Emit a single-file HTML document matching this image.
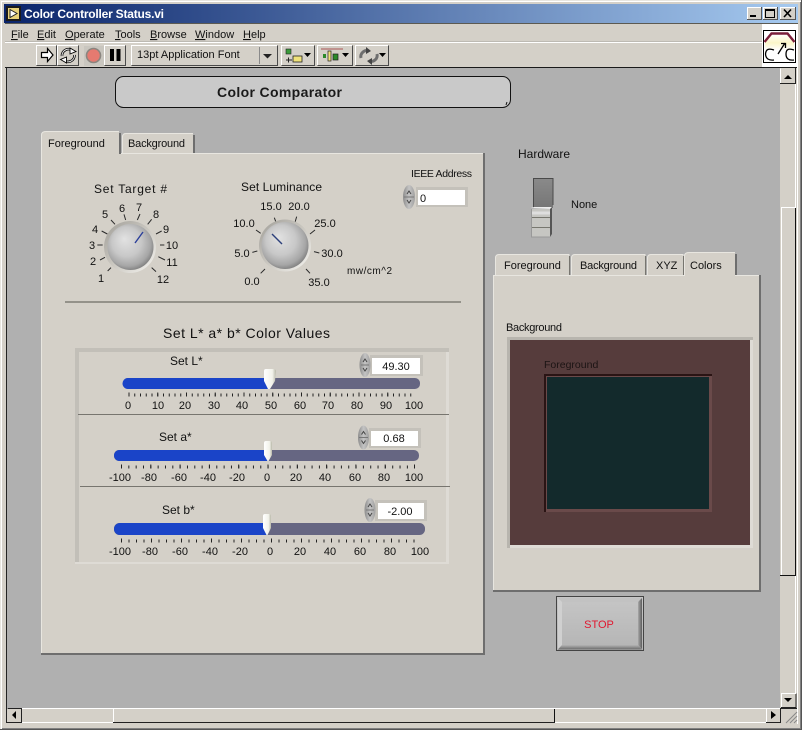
<!DOCTYPE html>
<html><head><meta charset="utf-8"><title>Color Controller Status.vi</title>
<style>
html,body{margin:0;padding:0;background:#fff;width:810px;height:733px;overflow:hidden}
svg{display:block;filter:blur(.3px)}
text{font-family:"Liberation Sans",sans-serif;font-size:11px;fill:#111}
.m{text-anchor:middle}
.u{text-decoration:underline}
</style></head><body>
<svg width="810" height="733" viewBox="0 0 810 733" xmlns="http://www.w3.org/2000/svg">
<defs>
<linearGradient id="tb" x1="0" x2="1" y1="0" y2="0"><stop offset="0" stop-color="#0a246a"/><stop offset="1" stop-color="#a6caf0"/></linearGradient>
<radialGradient id="ball" cx=".46" cy=".44" r=".58" fx=".36" fy=".32"><stop offset="0" stop-color="#e2e2e2"/><stop offset=".55" stop-color="#c8c8c8"/><stop offset=".85" stop-color="#a6a6a6"/><stop offset="1" stop-color="#7e7e7e"/></radialGradient>
<linearGradient id="halo" x1="0" y1="0" x2="1" y2="1"><stop offset="0" stop-color="#a09e98"/><stop offset=".5" stop-color="#cac7c0"/><stop offset="1" stop-color="#f6f5f1"/></linearGradient>
<linearGradient id="thumb" x1="0" x2="1" y1="0" y2="0"><stop offset="0" stop-color="#fff"/><stop offset=".7" stop-color="#f2f2ea"/><stop offset="1" stop-color="#b8b8a8"/></linearGradient>
<linearGradient id="spin" x1="0" x2="1" y1="0" y2="0"><stop offset="0" stop-color="#8c8c8c"/><stop offset=".5" stop-color="#c4c4c4"/><stop offset="1" stop-color="#a0a0a0"/></linearGradient>
<linearGradient id="stopg" x1="0" y1="0" x2="0" y2="1"><stop offset="0" stop-color="#c6c6c6"/><stop offset="1" stop-color="#b4b4b4"/></linearGradient>
<linearGradient id="tg" x1="0" y1="0" x2="0" y2="1"><stop offset="0" stop-color="#8a8a8a"/><stop offset="1" stop-color="#767676"/></linearGradient>
<linearGradient id="arc" x1="0" y1="0" x2="0" y2="1"><stop offset="0" stop-color="#fff"/><stop offset=".55" stop-color="#fbf6c8"/><stop offset="1" stop-color="#fff"/></linearGradient>
<linearGradient id="sb" x1="0" y1="0" x2="0" y2="1"><stop offset="0" stop-color="#b4b4b4"/><stop offset="1" stop-color="#6a6a6a"/></linearGradient>
<linearGradient id="sr" x1="0" y1="0" x2="1" y2="0"><stop offset="0" stop-color="#a8a8a8"/><stop offset="1" stop-color="#5e5e5e"/></linearGradient>
</defs>

<!-- window frame -->
<rect x="0" y="0" width="802" height="730" fill="#d4d0c8"/>
<path d="M0.5 730V0.5H802" fill="none" stroke="#e8e6e0"/>
<path d="M1.5 729V1.5H801" fill="none" stroke="#fff"/>
<path d="M801.5 0V729.5H0" fill="none" stroke="#555"/>
<path d="M800.5 2V728.5H2" fill="none" stroke="#808080"/>

<!-- title bar -->
<rect x="4" y="4" width="794" height="19" fill="url(#tb)"/>
<rect x="5" y="23" width="793" height="1" fill="#5c5a52"/>
<rect x="6" y="6" width="15" height="15" fill="#1b1b1b"/>
<rect x="8" y="8" width="11" height="11" fill="#e8d27a"/>
<path d="M10 9.5L17 13.5L10 17.5Z" fill="#fff" stroke="#222" stroke-width="1"/>
<text x="24" y="18" style="font-size:12px;font-weight:bold;fill:#fff" textLength="140">Color Controller Status.vi</text>
<g>
<rect x="747" y="7" width="15" height="13" fill="#d4d0c8"/><path d="M747.5 20V7.5H762" fill="none" stroke="#fff"/><path d="M761.5 7V19.5H747" fill="none" stroke="#555"/><rect x="750" y="15" width="6" height="2" fill="#000"/>
<rect x="763" y="7" width="15" height="13" fill="#d4d0c8"/><path d="M763.5 20V7.5H778" fill="none" stroke="#fff"/><path d="M777.5 7V19.5H763" fill="none" stroke="#555"/><rect x="765.5" y="9.5" width="9" height="8" fill="none" stroke="#000"/><rect x="765" y="9" width="10" height="2" fill="#000"/>
<rect x="780" y="7" width="16" height="13" fill="#d4d0c8"/><path d="M780.5 20V7.5H796" fill="none" stroke="#fff"/><path d="M795.5 7V19.5H780" fill="none" stroke="#555"/><path d="M784 9.5L791 17M791 9.5L784 17" stroke="#000" stroke-width="1.6"/>
</g>

<!-- menu -->
<text x="11" y="38"><tspan class="u">F</tspan>ile</text>
<text x="37" y="38"><tspan class="u">E</tspan>dit</text>
<text x="65" y="38"><tspan class="u">O</tspan>perate</text>
<text x="115" y="38"><tspan class="u">T</tspan>ools</text>
<text x="150" y="38"><tspan class="u">B</tspan>rowse</text>
<text x="195" y="38"><tspan class="u">W</tspan>indow</text>
<text x="243" y="38"><tspan class="u">H</tspan>elp</text>
<rect x="5" y="42" width="757" height="1" fill="#fff"/>
<rect x="5" y="41" width="757" height="1" fill="#bdbab3"/>

<!-- toolbar -->
<g fill="#d4d0c8" stroke="#4a4a4a">
<path d="M36.500 65.500H56.500V45.500"/>
<path d="M57.500 65.500H78.500V45.500"/>
<path d="M104.500 65.500H125.500V45.500"/>
<path d="M131.500 65.500H277.500V45.500"/>
<path d="M281.500 65.500H314.500V45.500"/>
<path d="M317.500 65.500H352.500V45.500"/>
<path d="M355.500 65.500H388.500V45.500"/>
</g>
<g fill="none" stroke="#fff">
<path d="M36.500 65V45.500H56M57.500 65V45.500H78M104.500 65V45.500H125M131.500 65V45.500H277M281.500 65V45.500H314M317.500 65V45.500H352M355.500 65V45.500H388"/>
</g>
<path d="M41.500 52.500H47.500V48.500L53 55L47.500 61.500V57.500H41.500Z" fill="#fff" stroke="#000" stroke-width="1.200"/>
<path d="M62 56a6.500 6.500 0 0 1 11-5M74.500 55a6.500 6.500 0 0 1-11 5" fill="none" stroke="#000" stroke-width="2.600"/>
<path d="M62 56a6.500 6.500 0 0 1 11-5M74.500 55a6.500 6.500 0 0 1-11 5" fill="none" stroke="#e8e8e8" stroke-width="1"/>
<path d="M70 48L76 51.500L70 54ZM66.500 63L60.500 59.500L66.500 57Z" fill="#fff" stroke="#000" stroke-width=".9"/>
<rect x="84" y="46" width="20" height="20" fill="#c9c6bf"/>
<circle cx="93.500" cy="55.500" r="7" fill="#e57a70" stroke="#8b8680" stroke-width="1.600"/>
<rect x="110" y="49" width="4" height="12" fill="#000"/><rect x="116.500" y="49" width="4" height="12" fill="#000"/>
<text x="137" y="58">13pt Application Font</text>
<path d="M259.500 47V64" stroke="#8a8a8a"/>
<path d="M263 54H272L267.500 58.500Z" fill="#222"/>
<rect x="286" y="49" width="5" height="5" fill="#3a9a3a" stroke="#222" stroke-width=".6"/>
<path d="M286 60h6M288.500 57.500v5" stroke="#222" stroke-width="1"/>
<rect x="293" y="56" width="9" height="6" fill="#efe27a" stroke="#222" stroke-width=".8"/>
<path d="M304 53H311L307.500 57Z" fill="#000"/>
<path d="M321 49h22" stroke="#a55" stroke-width="1"/>
<rect x="323" y="54" width="3" height="4" fill="#2a8a2a"/><rect x="328" y="51" width="3" height="10" fill="#efe27a" stroke="#222" stroke-width=".7"/><rect x="333" y="54" width="5" height="6" fill="#2a8a2a" stroke="#222" stroke-width=".7"/>
<path d="M342 53H349L345.500 57Z" fill="#000"/>
<path d="M361 58a6 6 0 0 1 8-7M377 54a6 6 0 0 1-8 7" fill="none" stroke="#6e6e6e" stroke-width="3"/>
<path d="M366 47l5 4-5 3zM372 65l-5-4 5-3z" fill="#444"/>
<path d="M379 53H386L382.500 57Z" fill="#000"/>

<!-- vi icon -->
<rect x="762" y="24" width="36" height="44" fill="#fff"/>
<rect x="763.500" y="30.500" width="32" height="32" fill="#fff" stroke="#000"/>
<path d="M765 43L772 34H787L794 43V50H765Z" fill="url(#arc)"/>
<path d="M764.500 42L771.500 33.500H787.500L794.500 42" fill="none" stroke="#7a1e3a" stroke-width="2.400"/>
<path d="M774 50Q766 47 765.500 54Q766 61 774 60M794 50Q786 47 786 54Q786 61 794 60" fill="none" stroke="#000" stroke-width="1.300"/>
<path d="M778 54L785 43M781 43.500H785.500V48" fill="none" stroke="#000" stroke-width="1.300"/>

<!-- panel -->
<rect x="6" y="67" width="775" height="642" fill="#b0b0b0"/>
<rect x="5" y="67" width="757" height="1" fill="#1a1a1a"/>
<rect x="762" y="67" width="36" height="1" fill="#1a1a1a"/>
<rect x="6" y="67" width="1" height="656" fill="#222"/>

<!-- vertical scrollbar -->
<rect x="780" y="68" width="16" height="640" fill="#d4d0c8"/>
<rect x="781" y="68" width="15" height="16" fill="#d4d0c8"/>
<path d="M780.500 84V68.500" stroke="#fff"/><path d="M780 83.500H796" stroke="#222"/><path d="M795.500 68V84" stroke="#222"/>
<path d="M784 79H792L788 75Z" fill="#000"/>
<rect x="795" y="84" width="1" height="124" fill="#fff"/>
<path d="M781 207.500H795" stroke="#fff"/><path d="M781.500 208V575" stroke="#fff"/>
<rect x="795" y="208" width="1" height="368" fill="#111"/>
<rect x="780" y="575" width="16" height="1" fill="#111"/>
<rect x="795" y="576" width="1" height="117" fill="#fff"/>
<path d="M781.500 693.500V707.500H796V693.500" fill="#d4d0c8" stroke="#222"/>
<path d="M781.500 707V693.500H796" fill="none" stroke="#fff"/>
<path d="M784 698H792L788 702Z" fill="#000"/>
<rect x="797" y="24" width="1" height="700" fill="#fff"/>

<!-- horizontal scrollbar -->
<rect x="7" y="708" width="790" height="15" fill="#d4d0c8"/>
<rect x="7" y="708" width="773" height="1" fill="#fff"/>
<path d="M7.500 708.500H21.500V722" fill="none" stroke="#222"/>
<path d="M7 722.500H22" stroke="#222"/>
<path d="M16 711V719L12 715Z" fill="#000"/>
<rect x="22" y="722" width="91" height="1" fill="#fff"/>
<path d="M113.500 708V722" stroke="#fff"/>
<rect x="113" y="722" width="442" height="1" fill="#222"/>
<path d="M554.500 709V722" stroke="#111"/>
<rect x="555" y="722" width="211" height="1" fill="#fff"/>
<path d="M766.500 708.500V722" stroke="#fff"/>
<path d="M780.500 708V722.500H766" fill="none" stroke="#222"/>
<path d="M780 708.500H797" stroke="#222"/>
<path d="M771 711V719L776 715Z" fill="#000"/>
<path d="M786 723L797 712M790 723L797 716M794 723L797 720" stroke="#888" stroke-width="1"/>

<!-- title decoration -->
<rect x="115.500" y="76.500" width="395" height="31" rx="8" fill="#c9c9c9" stroke="#111"/>
<path d="M506 105L507 102" stroke="#111"/>
<text x="217" y="97" textLength="125" style="font-size:14px;font-weight:bold;fill:#1a1a1a">Color Comparator</text>

<!-- left tab panel -->
<rect x="41" y="153" width="444" height="502" fill="#d4d0c8"/>
<path d="M41.500 655V153.500H485" fill="none" stroke="#e8e6e0"/>
<rect x="483" y="153" width="2" height="502" fill="#6e6e6e"/>
<rect x="41" y="653" width="444" height="2" fill="#6e6e6e"/>
<path d="M42 155V135Q42 131 46 131H119V155Z" fill="#d4d0c8"/>
<path d="M41.500 154V135Q41.500 131.500 46 131.500H119" fill="none" stroke="#e8e6e0"/>
<rect x="119" y="133" width="2" height="21" fill="#6e6e6e"/>
<path d="M122 153V137Q122 133 126 133H193V153Z" fill="#d4d0c8"/>
<path d="M122.500 153V137Q122.500 133.500 126 133.500H193" fill="none" stroke="#e8e6e0"/>
<rect x="193" y="135" width="2" height="18" fill="#6e6e6e"/>
<text x="48" y="147">Foreground</text>
<text x="128" y="147" textLength="57">Background</text>

<text x="94" y="193" style="font-size:12px" textLength="73">Set Target #</text>
<text x="241" y="191" style="font-size:12px" textLength="81">Set Luminance</text>
<text x="411" y="177" style="font-size:10.500px" textLength="61">IEEE Address</text>

<!-- knob ticks -->
<g transform="translate(40,125) scale(.33333)" stroke="#2a2a2a" stroke-width="3" fill="none">
<path d="M213 428L203 438M195 397L180 405M188 360H172M202 327L185 318M225 298L213 285M257 285L252 268M292 285L300 267M323 298L335 283M348 327L365 318M360 360H373M355 395L375 405M335 428L348 440"/>
<path d="M675 432L662 445M652 378L637 382M662 325L648 315M708 292L703 278M765 292L770 275M810 327L825 315M822 380L838 384M798 432L810 445"/>
</g>
<g>
<text class="m" x="101" y="282">1</text><text class="m" x="93" y="265">2</text><text class="m" x="92" y="249">3</text><text class="m" x="95" y="233">4</text><text class="m" x="105" y="218">5</text><text class="m" x="122" y="212">6</text><text class="m" x="139" y="211">7</text><text class="m" x="156" y="218">8</text><text class="m" x="166" y="233">9</text><text class="m" x="172" y="249">10</text><text class="m" x="172" y="266">11</text><text class="m" x="163" y="283">12</text>
<text class="m" x="252" y="285">0.0</text><text class="m" x="242" y="257">5.0</text><text class="m" x="244" y="227">10.0</text><text class="m" x="271" y="210">15.0</text><text class="m" x="299" y="210">20.0</text><text class="m" x="325" y="227">25.0</text><text class="m" x="332" y="257">30.0</text><text class="m" x="319" y="286">35.0</text>
</g>
<text x="347" y="274" style="font-size:10px" textLength="45">mw/cm^2</text>

<!-- knobs -->
<circle cx="130" cy="247" r="26" fill="url(#halo)"/>
<circle cx="130.500" cy="247" r="23" fill="url(#ball)"/>
<path d="M135 243L143 232" stroke="#2b3f9a" stroke-width="1.400"/>
<circle cx="285" cy="245.500" r="26" fill="url(#halo)"/>
<circle cx="285" cy="245.500" r="23.500" fill="url(#ball)"/>
<path d="M272 234L282 244" stroke="#2b3f7a" stroke-width="1.400"/>

<!-- IEEE numeric -->
<rect x="416" y="187" width="52" height="20" fill="#c4c1ba"/>
<rect x="418" y="190" width="47" height="15" fill="#fff"/>
<ellipse cx="409" cy="197" rx="6" ry="12" fill="url(#spin)"/>
<path d="M407 194L409 191L411 194M407 200L409 203L411 200" fill="none" stroke="#444"/>
<path d="M404 197H414" stroke="#777"/>
<text x="420" y="202">0</text>

<path d="M65 302H461" stroke="#6e6c66" stroke-width="1.200"/>
<text x="163" y="338" style="font-size:14px" textLength="167">Set L* a* b* Color Values</text>

<!-- cluster -->
<rect x="75" y="348" width="374" height="216" fill="#c2bfb8"/>
<rect x="79" y="352" width="367" height="210" fill="#d4d0c8"/>
<path d="M446 352H449V564H75V562H446Z" fill="#dedbd5"/>
<path d="M78 414.500H449M80 486.500H450" stroke="#77756f"/>

<text x="170" y="365" style="font-size:12px">Set L*</text>
<text x="159" y="441" style="font-size:12px">Set a*</text>
<text x="162" y="514" style="font-size:12px">Set b*</text>

<!-- numerics -->
<g fill="#c4c1ba"><rect x="370" y="355" width="53" height="21"/><rect x="369" y="428" width="52" height="20"/><rect x="375" y="500" width="52" height="21"/></g>
<g fill="#fff"><rect x="372" y="358" width="48" height="16"/><rect x="371" y="431" width="47" height="15"/><rect x="378" y="503" width="46" height="16"/></g>
<g fill="url(#spin)"><ellipse cx="365" cy="365" rx="5.500" ry="12"/><ellipse cx="363.500" cy="437.500" rx="5.500" ry="12"/><ellipse cx="370" cy="510" rx="5.500" ry="12"/></g>
<path d="M361 365H369M359 437.500H368M366 510H374" stroke="#777"/>
<path d="M363 362L365 359L367 362M363 368L365 371L367 368M361.500 434.500L363.500 431.500L365.500 434.500M361.500 440.500L363.500 443.500L365.500 440.500M368 507L370 504L372 507M368 513L370 516L372 513" fill="none" stroke="#444"/>
<text x="396" y="370" class="m">49.30</text>
<text x="394" y="442" class="m">0.68</text>
<text x="400" y="515" class="m">-2.00</text>

<!-- slider tracks -->
<rect x="123" y="378" width="297" height="11" rx="5" fill="#666682"/>
<path d="M128 378H269V389H128A5.500 5.500 0 0 1 128 378Z" fill="#1a44c8"/>
<rect x="114" y="450" width="305" height="11" rx="5" fill="#666682"/>
<path d="M119.500 450H268V461H119.500A5.500 5.500 0 0 1 119.500 450Z" fill="#1a44c8"/>
<rect x="114" y="523" width="311" height="12" rx="5.500" fill="#666682"/>
<path d="M120 523H267V535H120A6 6 0 0 1 120 523Z" fill="#1a44c8"/>

<!-- slider thumbs -->
<path d="M264 371Q264 369 266 369H273Q276 369 276 371L275 381L270 389H268L264 381Z" fill="url(#thumb)"/>
<path d="M264 443Q264 441 266 441H270Q272 441 272 443V455L268.500 461H267.500L264 455Z" fill="url(#thumb)"/>
<path d="M263 516Q263 514 265 514H269Q271 514 271 516V528L267.500 535H266.500L263 528Z" fill="url(#thumb)"/>

<!-- slider ticks -->
<g fill="none" stroke="#222">
<path d="M128.500 395H416" stroke-width="3" stroke-dasharray="1 4.750"/>
<path d="M128.500 394.500H416" stroke-width="4" stroke-dasharray="1 27.750"/>
<path d="M121 467H415" stroke-width="3" stroke-dasharray="1 6.330"/>
<path d="M121 466.500H415" stroke-width="4" stroke-dasharray="1 28.300"/>
<path d="M121 541H421" stroke-width="3" stroke-dasharray="1 6.500"/>
<path d="M121 540.500H421" stroke-width="4" stroke-dasharray="1 29"/>
</g>

<!-- slider labels -->
<text class="m" x="128" y="409">0</text><text class="m" x="158" y="409">10</text><text class="m" x="185" y="409">20</text><text class="m" x="214" y="409">30</text><text class="m" x="242" y="409">40</text><text class="m" x="271" y="409">50</text><text class="m" x="300" y="409">60</text><text class="m" x="328" y="409">70</text><text class="m" x="357" y="409">80</text><text class="m" x="386" y="409">90</text><text class="m" x="414" y="409">100</text>
<text class="m" x="120" y="481">-100</text><text class="m" x="149" y="481">-80</text><text class="m" x="179" y="481">-60</text><text class="m" x="208" y="481">-40</text><text class="m" x="237" y="481">-20</text><text class="m" x="267" y="481">0</text><text class="m" x="296" y="481">20</text><text class="m" x="325" y="481">40</text><text class="m" x="355" y="481">60</text><text class="m" x="384" y="481">80</text><text class="m" x="414" y="481">100</text>
<text class="m" x="120" y="555">-100</text><text class="m" x="150" y="555">-80</text><text class="m" x="180" y="555">-60</text><text class="m" x="210" y="555">-40</text><text class="m" x="240" y="555">-20</text><text class="m" x="270" y="555">0</text><text class="m" x="300" y="555">20</text><text class="m" x="330" y="555">40</text><text class="m" x="360" y="555">60</text><text class="m" x="390" y="555">80</text><text class="m" x="420" y="555">100</text>

<!-- hardware -->
<text x="518" y="158" style="font-size:12px">Hardware</text>
<rect x="533" y="178" width="20" height="30" fill="url(#tg)"/>
<path d="M533.500 208V178.500H553V205" fill="none" stroke="#4a4a4a"/>
<path d="M531 208L534 207H552L551 209Z" fill="#eee"/>
<rect x="531" y="209" width="19" height="28" fill="#c6c6c2"/>
<path d="M550 209L552 207V234L550 237Z" fill="#555"/>
<path d="M531 217.500H550M531 227.500H550" stroke="#77776f"/>
<path d="M531 213H550" stroke="#dedede" stroke-width="3"/>
<path d="M531.500 209V237H550" fill="none" stroke="#999"/>
<text x="571" y="208">None</text>

<!-- right tab panel -->
<rect x="493" y="275" width="268" height="317" fill="#d4d0c8"/>
<path d="M493.500 592V275.500H761" fill="none" stroke="#e8e6e0"/>
<rect x="759" y="275" width="2" height="317" fill="#6e6e6e"/>
<rect x="493" y="590" width="268" height="2" fill="#6e6e6e"/>
<g fill="#d4d0c8" stroke="#e8e6e0">
<path d="M495.500 275V258Q495.500 254.500 499 254.500H569V275"/>
<path d="M571.500 275V258Q571.500 254.500 575 254.500H645V275"/>
<path d="M647.500 275V258Q647.500 254.500 651 254.500H683V275"/>
</g>
<path d="M569.500 256V275M645.500 256V275M683.500 256V275" stroke="#77756f" stroke-width="1.200"/>
<path d="M685 277V256Q685 252 689 252H735V277Z" fill="#d4d0c8"/>
<path d="M684.500 276V256Q684.500 252.500 689 252.500H735" fill="none" stroke="#e8e6e0"/>
<rect x="735" y="254" width="2" height="21" fill="#6e6e6e"/>
<text x="504" y="269">Foreground</text>
<text x="580" y="269" textLength="57">Background</text>
<text x="656" y="269">XYZ</text>
<text x="690" y="269">Colors</text>

<text x="506" y="331" textLength="56">Background</text>
<rect x="507" y="337" width="246" height="211" fill="#dedbd5"/>
<path d="M507 337H753V340H510V548H507Z" fill="#b8b5ae"/>
<rect x="510" y="340" width="240" height="205" fill="#563c3c"/>
<text x="544" y="368" style="font-size:10.500px;fill:#1c1414">Foreground</text>
<rect x="544" y="374" width="168" height="138" fill="#6a4a4a"/>
<path d="M544 374H712V376H546V512H544Z" fill="#2a1414"/>
<rect x="547" y="377" width="162" height="132" fill="#132a2c"/>

<!-- stop -->
<rect x="556.500" y="596.500" width="87" height="54" fill="url(#stopg)" stroke="#444"/>
<path d="M558 598H642L638 602H562Z" fill="#c2c2c2"/>
<path d="M558 598V649L562 645V602Z" fill="#d0d0d0"/>
<path d="M642 598V649L638 645V602Z" fill="url(#sr)"/>
<path d="M558 649.500H642L638 645H562Z" fill="url(#sb)"/>
<text x="599" y="628" class="m" style="font-size:11px;fill:#e01830">STOP</text>
</svg>
</body></html>
